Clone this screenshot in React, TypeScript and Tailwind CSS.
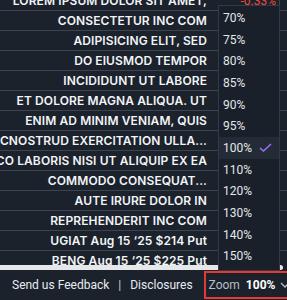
import React from "react";

const rows = [
  "LOREM IPSUM DOLOR SIT AMET,",
  "CONSECTETUR INC COM",
  "ADIPISICING ELIT, SED",
  "DO EIUSMOD TEMPOR",
  "INCIDIDUNT UT LABORE",
  "ET DOLORE MAGNA ALIQUA. UT",
  "ENIM AD MINIM VENIAM, QUIS",
  "CNOSTRUD EXERCITATION ULLA...",
  "CO LABORIS NISI UT ALIQUIP EX EA",
  "COMMODO CONSEQUAT...",
  "AUTE IRURE DOLOR IN",
  "REPREHENDERIT INC COM",
  "UGIAT Aug 15 \u201825 $214 Put",
  "BENG Aug 15 \u201825 $225 Put",
];

const zooms = ["70%", "75%", "80%", "85%", "90%", "95%", "100%", "110%", "120%", "130%", "140%", "150%"];

export default function App() {
  return (
    <div className="relative w-[287px] h-[300px] overflow-hidden bg-[#1b222c]" style={{ fontFamily: "Inter, 'Noto Sans', sans-serif" }}>
      <div className="h-[270px] overflow-hidden relative">
        <div className="mt-[-9px] flex flex-col">
          {rows.map((r, i) => (
            <div key={i} className="h-[20px] flex border-b border-[#3b4450] shrink-0">
              <div className="w-[207px] shrink-0 flex items-center justify-end whitespace-nowrap overflow-visible text-[12px] font-semibold text-[#f2f4f7] tracking-[0.1px]">
                <span className="whitespace-nowrap">{r}</span>
              </div>
              <div className="w-[72px] shrink-0 flex items-center justify-end pr-[3px] text-[12px] text-[#f04a3c]" style={{ fontFamily: "Roboto, sans-serif" }}>
                {i === 0 ? "-0.33%" : ""}
              </div>
              <div className="flex-1 border-l border-[#3b4450]"></div>
            </div>
          ))}
        </div>
        <div className="absolute left-0 top-[265px] w-[283px] h-[5px] rounded-r-full bg-[#e6e7e9]"></div>
      </div>

      <div className="h-[30px] flex items-center bg-[#1b222c] text-[12px] text-[#e8ecf2] whitespace-nowrap" style={{ fontFamily: "Roboto, sans-serif" }}>
        <span className="ml-[12px] shrink-0">Send us Feedback</span>
        <span className="ml-[9px] shrink-0 text-[#c9ced6]">|</span>
        <span className="ml-[9px] shrink-0">Disclosures</span>
        <div className="ml-[11px] h-[28px] flex-1 min-w-0 flex items-center border-2 border-r-0 border-[#e53935] pl-[3px]">
          <span className="shrink-0 text-[#b7bdc6]">Zoom</span>
          <span className="ml-[6px] shrink-0 font-bold text-white">100%</span>
          <svg className="ml-[5px] shrink-0" width="10" height="8" viewBox="0 0 10 8">
            <path d="M1 2 L5 6 L9 2" stroke="#b7bdc6" strokeWidth="1.3" fill="none" />
          </svg>
        </div>
      </div>

      <div className="absolute left-[218px] top-[5px] w-[62px] h-[266px] bg-[#19202a] border border-[#313a46] py-[1px]" style={{ fontFamily: "Roboto, sans-serif" }}>
        {zooms.map((z) => (
          <div key={z} className={`h-[21.7px] flex items-center pl-[4px] text-[12px] text-[#e4e7eb] ${z === "100%" ? "bg-[#232b36]" : ""}`}>
            <span>{z}</span>
            {z === "100%" && (
              <svg className="ml-[7px]" width="13" height="9" viewBox="0 0 13 9">
                <path d="M1 5 L4.5 8 L12 1" stroke="#9b6cf2" strokeWidth="1.6" fill="none" />
              </svg>
            )}
          </div>
        ))}
      </div>
    </div>
  );
}
